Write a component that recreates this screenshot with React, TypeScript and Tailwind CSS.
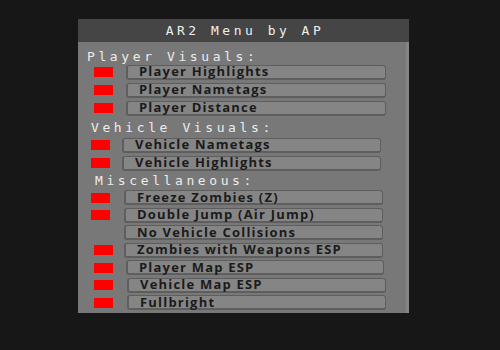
type Toggle = {
  label: string;
  on: boolean;
  redLeft: string;
  gap: string;
  width: string;
};

const playerRows: Toggle[] = [
  { label: "Player Highlights", on: true, redLeft: "ml-[16px]", gap: "ml-[13px]", width: "w-[260px]" },
  { label: "Player Nametags", on: true, redLeft: "ml-[16px]", gap: "ml-[13px]", width: "w-[260px]" },
  { label: "Player Distance", on: true, redLeft: "ml-[16px]", gap: "ml-[13px]", width: "w-[260px]" },
];

const vehicleRows: Toggle[] = [
  { label: "Vehicle Nametags", on: true, redLeft: "ml-[13px]", gap: "ml-[12px]", width: "w-[259px]" },
  { label: "Vehicle Highlights", on: true, redLeft: "ml-[13px]", gap: "ml-[12px]", width: "w-[259px]" },
];

const miscRows: Toggle[] = [
  { label: "Freeze Zombies (Z)", on: true, redLeft: "ml-[13px]", gap: "ml-[14px]", width: "w-[259px]" },
  { label: "Double Jump (Air Jump)", on: true, redLeft: "ml-[13px]", gap: "ml-[14px]", width: "w-[259px]" },
  { label: "No Vehicle Collisions", on: false, redLeft: "ml-[13px]", gap: "ml-[14px]", width: "w-[259px]" },
  { label: "Zombies with Weapons ESP", on: true, redLeft: "ml-[16px]", gap: "ml-[11px]", width: "w-[259px]" },
  { label: "Player Map ESP", on: true, redLeft: "ml-[16px]", gap: "ml-[13px]", width: "w-[258px]" },
  { label: "Vehicle Map ESP", on: true, redLeft: "ml-[16px]", gap: "ml-[14px]", width: "w-[259px]" },
  { label: "Fullbright", on: true, redLeft: "ml-[16px]", gap: "ml-[14px]", width: "w-[259px]" },
];

const mono = { fontFamily: '"DejaVu Sans Mono", "Liberation Mono", monospace' };
const sans = { fontFamily: '"Open Sans", "Liberation Sans", sans-serif' };

const Row = ({ row, tall }: { row: Toggle; tall?: boolean }) => (
  <div className={`flex items-center ${tall ? "h-[18px]" : "h-[17.5px]"}`}>
    <div className={`${row.redLeft} h-[10px] w-[19px] ${row.on ? "bg-[#ff0000]" : "bg-transparent"}`} />
    <button
      className={`${row.gap} ${row.width} flex h-[15px] items-center rounded-[3px] border border-b-[2px] border-l-[2px] border-[#5e5e5e] bg-[#858585] pl-[11px] text-left text-[13px] font-bold leading-none tracking-[1.2px] text-[#1b1b1b]`}
      style={sans}
    >
      {row.label}
    </button>
  </div>
);

const Section = ({ title, className }: { title: string; className: string }) => (
  <div
    className={`flex h-[14px] items-center text-[13px] leading-none tracking-[3.6px] text-[#ececec] ${className}`}
    style={mono}
  >
    {title}
  </div>
);

export default function App() {
  return (
    <div className="flex h-[350px] w-[500px] items-start bg-[#171717] pl-[78px] pt-[19px]">
      <div className="flex h-[294px] w-[331px] flex-col bg-[#787878]">
        <div
          className="flex h-[23px] items-center justify-center bg-[#454545] pl-[3px] text-[13px] tracking-[3.5px] text-[#eeeeee]"
          style={mono}
        >
          AR2 Menu by AP
        </div>

        <div className="flex flex-1 flex-col border-r-[3px] border-[#858585]">
          <Section title="Player Visuals:" className="mt-[7px] ml-[9px]" />
          <div className="flex flex-col">
            {playerRows.map((r) => (
              <Row key={r.label} row={r} tall />
            ))}
          </div>

          <Section title="Vehicle Visuals:" className="mt-[3px] ml-[13px]" />
          <div className="mt-[2px] flex flex-col">
            {vehicleRows.map((r) => (
              <Row key={r.label} row={r} tall />
            ))}
          </div>

          <Section title="Miscellaneous:" className="mt-[1px] ml-[17px]" />
          <div className="mt-[2px] flex flex-col">
            {miscRows.map((r) => (
              <Row key={r.label} row={r} />
            ))}
          </div>
        </div>
      </div>
    </div>
  );
}
